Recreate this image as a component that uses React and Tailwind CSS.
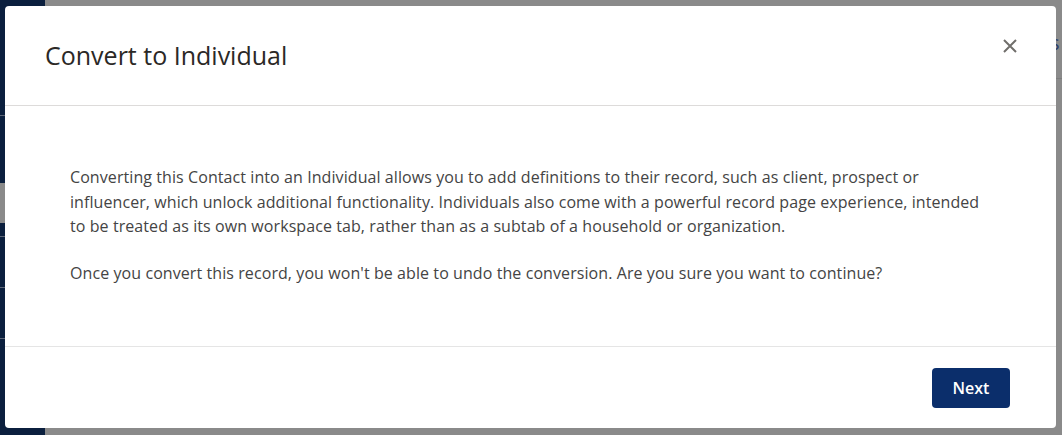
const App = () => {
    return (
        <div className="relative w-[1062px] h-[435px] overflow-hidden bg-[#8a8a8a] font-['Open_Sans',sans-serif]">
            {/* background page behind the overlay */}
            <div className="flex h-full">
                <div className="w-[45px] h-full bg-[#0b1f3e] flex flex-col">
                    <div className="h-[116px] border-b border-[#5d6677]" />
                    <div className="h-[67px]" />
                    <div className="h-[40px] bg-[#8a8a8a]" />
                    <div className="h-[14px] border-b border-[#5d6677]" />
                    <div className="h-[51px] border-b border-[#5d6677]" />
                    <div className="h-[51px] border-b border-[#5d6677]" />
                </div>
                <div className="flex-1 flex justify-end">
                    <div className="w-[10px] pt-[31px] border-b border-[#7d7d7d] h-[79px] text-[20px] leading-[24px] text-[#2a3e6a] overflow-hidden">
                        <span className="-ml-[2px]">s</span>
                    </div>
                </div>
            </div>

            {/* modal */}
            <div className="absolute left-[5px] top-[6px] w-[1051px] h-[422px] bg-white rounded-[4px] flex flex-col">
                <div className="h-[100px] flex items-center justify-between pl-[40px] pr-[39px] border-b border-[#dddbda]">
                    <h2 className="text-[25px] text-[#2b2826] font-normal">Convert to Individual</h2>
                    <button className="w-[14px] h-[14px] -mt-[20px] text-[#706e6b]">
                        <svg viewBox="0 0 14 14" width="14" height="14" fill="none" stroke="currentColor" strokeWidth="2">
                            <path d="M1 1l12 12M13 1L1 13" />
                        </svg>
                    </button>
                </div>

                <div className="flex-1 pl-[65px] pt-[59px] text-[16px] leading-[24.5px] tracking-[0.08px] text-[#444444]">
                    <p className="w-[918px]">
                        Converting this Contact into an Individual allows you to add definitions to their record, such as client, prospect or influencer, which unlock additional functionality. Individuals also come with a powerful record page experience, intended to be treated as its own workspace tab, rather than as a subtab of a household or organization.
                    </p>
                    <p className="mt-[22px]">
                        Once you convert this record, you won't be able to undo the conversion. Are you sure you want to continue?
                    </p>
                </div>

                <div className="h-[82px] border-t border-[#e5e5e5] flex items-center justify-end pr-[46px]">
                    <button className="w-[78px] h-[40px] rounded-[4px] bg-[#0b2e6b] text-white text-[16px] font-semibold">
                        Next
                    </button>
                </div>
            </div>
        </div>
    );
};

export default App;
